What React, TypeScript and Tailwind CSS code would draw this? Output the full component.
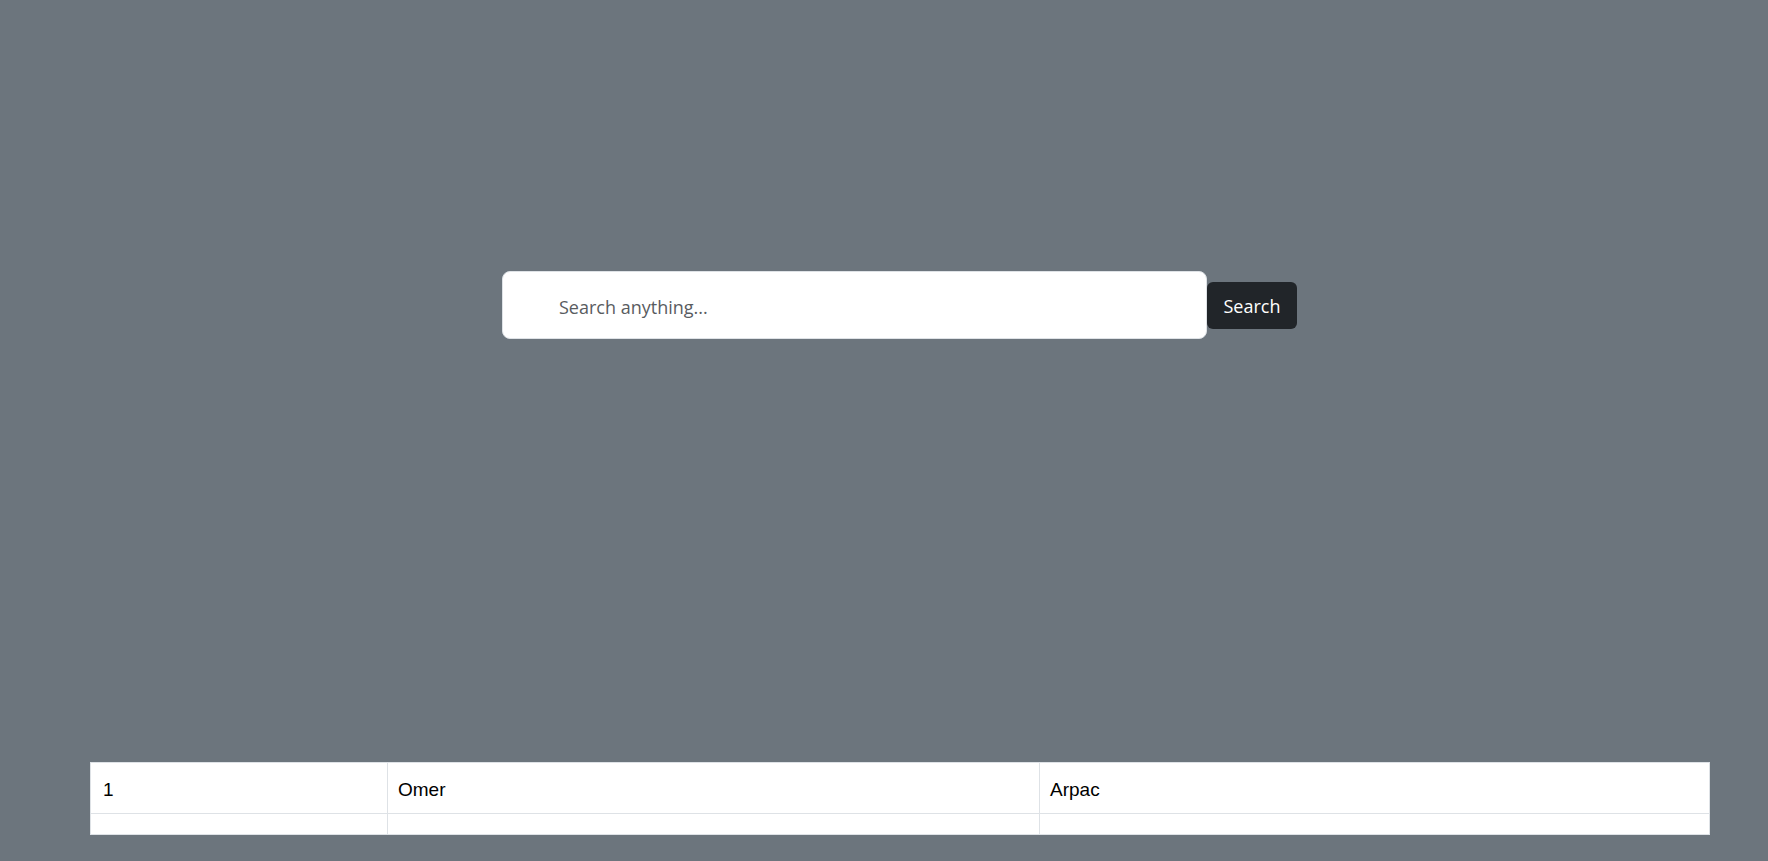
import React, { useState } from 'react';

const rows = [
  { id: '1', first: 'Omer', last: 'Arpac' },
];

export default function App() {
  const [query, setQuery] = useState('');

  return (
    <div className="min-h-screen bg-[#6c757d] pt-[271px] pb-[28px]">
      {/* Search */}
      <form
        onSubmit={(e) => e.preventDefault()}
        className="ml-[502px] flex items-center"
      >
        <input
          value={query}
          onChange={(e) => setQuery(e.target.value)}
          placeholder="Search anything..."
          className="w-[705px] h-[68px] rounded-lg border border-[#dee2e6] bg-white pl-[56px] pr-4 pt-[4px]
                     text-[18px] text-[#212529] placeholder-[#595c5f] outline-none font-['Open_Sans',sans-serif]"
        />
        <button
          type="submit"
          className="w-[90px] h-[47px] rounded-md bg-[#212529] pt-[3px] text-white text-[18px] font-['Open_Sans',sans-serif]"
        >
          Search
        </button>
      </form>

      {/* Results */}
      <div className="ml-[90px] mt-[423px] w-[1620px] bg-white">
        <table className="w-full border-collapse text-[19px] text-black font-['Liberation_Sans',Arial,sans-serif]">
          <tbody>
            {rows.map((r) => (
              <tr key={r.id} className="h-[51px]">
                <td className="w-[297px] border border-[#dee2e6] px-3 pt-[5px] align-middle">{r.id}</td>
                <td className="w-[652px] border border-[#dee2e6] px-[10px] pt-[5px] align-middle">{r.first}</td>
                <td className="border border-[#dee2e6] px-[10px] pt-[5px] align-middle">{r.last}</td>
              </tr>
            ))}
            <tr className="h-[21px]">
              <td className="border border-[#dee2e6]"></td>
              <td className="border border-[#dee2e6]"></td>
              <td className="border border-[#dee2e6]"></td>
            </tr>
          </tbody>
        </table>
      </div>
    </div>
  );
}
